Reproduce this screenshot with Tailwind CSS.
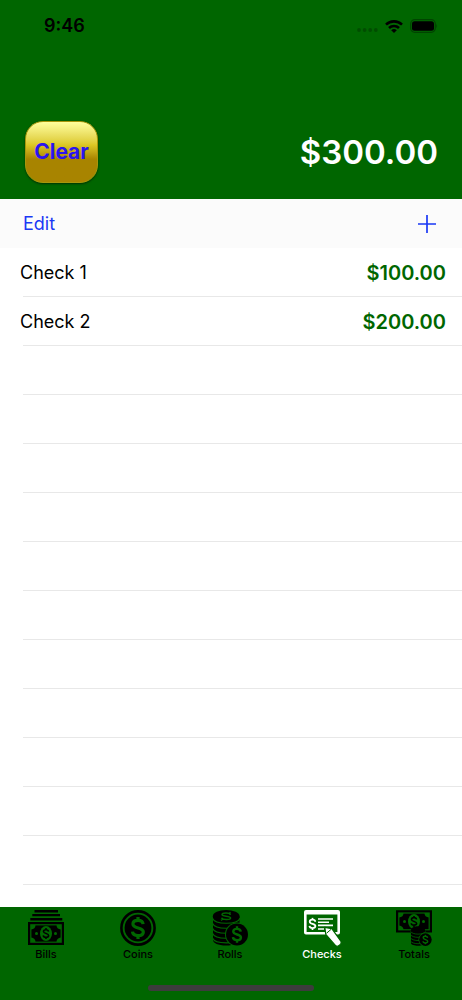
<!DOCTYPE html>
<html lang="en">
<head>
    <meta charset="UTF-8">
    <meta name="viewport" content="width=device-width, initial-scale=1.0">
    <title>Checks</title>
    <script src="https://cdn.jsdelivr.net/npm/@tailwindcss/browser@4"></script>
</head>
<body class="flex min-h-screen flex-col bg-white font-['Inter','Liberation_Sans',sans-serif] text-black">

    <!-- Shared dollar sign for the icons -->
    <svg class="hidden">
        <symbol id="dollar" viewBox="-7 -10 14 20">
            <path d="M4.4 -3.4C4.2 -5.4 2.6 -6.6 0 -6.6C-2.6 -6.6 -4.4 -5.5 -4.4 -3.5C-4.4 0.8 4.6 -0.8 4.6 3.4C4.6 5.5 2.6 6.6 0 6.6C-2.8 6.6 -4.6 5.5 -4.8 3.2M0 -9.6V-6M0 9.6V6" fill="none" stroke="currentColor" stroke-width="2.8"/>
        </symbol>
    </svg>

    <header class="bg-[#006600]">
        <div class="flex items-center justify-between pt-3 pr-6 pl-11">
            <span class="text-lg font-semibold">9:46</span>
            <div class="flex items-center gap-[7px]">
                <svg class="mt-2 h-1 w-[21px]" viewBox="0 0 21 4" fill="#004d00">
                    <circle cx="2" cy="2" r="1.9"/><circle cx="7.6" cy="2" r="1.9"/><circle cx="13.2" cy="2" r="1.9"/><circle cx="18.8" cy="2" r="1.9"/>
                </svg>
                <svg class="h-[13px] w-[18px]" viewBox="0 0 18 13" fill="none" stroke="black" stroke-width="2.6">
                    <path d="M1 4.6A11.5 11.5 0 0 1 17 4.6"/>
                    <path d="M4 8A7.2 7.2 0 0 1 14 8"/>
                    <path d="M9 13L6.2 10.3A4 4 0 0 1 11.8 10.3Z" fill="black" stroke="none"/>
                </svg>
                <svg class="h-[14px] w-[28px]" viewBox="0 0 28 14">
                    <rect x="0.7" y="0.7" width="24.6" height="12.6" rx="4" fill="none" stroke="#004400" stroke-width="1.2"/>
                    <rect x="2" y="2.2" width="22" height="9.6" rx="2.5"/>
                    <path d="M26.4 4.8Q28 7 26.4 9.2Z" fill="#004000"/>
                </svg>
            </div>
        </div>
        <div class="flex items-center justify-between px-6 pt-[81px] pb-4">
            <button class="ml-px h-[62px] w-[73px] rounded-[18px] border border-[#a8960c] bg-linear-to-b from-[#ffff9c] via-[#dcc824] via-38% to-[#a88400] to-62% text-[21px] font-bold text-[#2a14f0] shadow-[0_1px_2px_#003300]">Clear</button>
            <span class="text-[33px] leading-10 font-semibold text-white">$300.00</span>
        </div>
    </header>

    <div class="flex h-[49px] items-center justify-between bg-[#fbfbfb] pr-[26px] pl-[23px] text-[#1a38f5]">
        <button class="text-lg">Edit</button>
        <button aria-label="Add check">
            <svg class="size-[18px]" viewBox="0 0 18 18" stroke="currentColor" stroke-width="1.7"><path d="M9 0V18M0 9H18"/></svg>
        </button>
    </div>

    <main class="flex-1">
        <ul>
            <li>
                <div class="flex h-12 items-center justify-between pt-0.5 pr-4 pl-5">
                    <span class="text-lg">Check 1</span>
                    <span class="text-xl font-semibold text-[#006600]">$100.00</span>
                </div>
                <div class="ml-[23px] h-px bg-[#e8e8e8]"></div>
            </li>
            <li>
                <div class="flex h-12 items-center justify-between pt-0.5 pr-4 pl-5">
                    <span class="text-lg">Check 2</span>
                    <span class="text-xl font-semibold text-[#006600]">$200.00</span>
                </div>
                <div class="ml-[23px] h-px bg-[#e8e8e8]"></div>
            </li>
        </ul>
        <!-- Empty rows -->
        <div class="ml-[23px]">
            <div class="h-[49px] border-b border-[#e8e8e8]"></div>
            <div class="h-[49px] border-b border-[#e8e8e8]"></div>
            <div class="h-[49px] border-b border-[#e8e8e8]"></div>
            <div class="h-[49px] border-b border-[#e8e8e8]"></div>
            <div class="h-[49px] border-b border-[#e8e8e8]"></div>
            <div class="h-[49px] border-b border-[#e8e8e8]"></div>
            <div class="h-[49px] border-b border-[#e8e8e8]"></div>
            <div class="h-[49px] border-b border-[#e8e8e8]"></div>
            <div class="h-[49px] border-b border-[#e8e8e8]"></div>
            <div class="h-[49px] border-b border-[#e8e8e8]"></div>
            <div class="h-[49px] border-b border-[#e8e8e8]"></div>
        </div>
    </main>

    <footer class="bg-[#006600] pt-[3px] pb-[9px]">
        <nav class="mr-0.5 grid grid-cols-5 text-[11px] leading-4 font-medium">
            <a href="#bills" class="flex flex-col items-center">
                <svg class="size-9" viewBox="0 0 36 36">
                    <path d="M6.5 0H30V2.5H6.5ZM4.3 4H32V6.3H4.3ZM2.3 8H34.3V10.4H2.3Z"/>
                    <path d="M0 12H36V35H0Z"/>
                    <rect x="2.8" y="14.8" width="30.4" height="17.4" fill="none" stroke="#006600" stroke-width="1.2"/>
                    <path d="M3 15H7.5Q7.5 19 3 19.5ZM33 15H28.5Q28.5 19 33 19.5ZM3 32H7.5Q7.5 28 3 27.5ZM33 32H28.5Q28.5 28 33 27.5Z" fill="#006600"/>
                    <g fill="#006600"><ellipse cx="18" cy="23.5" rx="6" ry="7.6"/><circle cx="8.5" cy="23.5" r="1.5"/><circle cx="27.5" cy="23.5" r="1.5"/></g>
                    <use href="#dollar" x="14" y="17.5" width="8" height="12"/>
                </svg>
                Bills
            </a>
            <a href="#coins" class="flex flex-col items-center">
                <svg class="size-9" viewBox="0 0 36 36">
                    <circle cx="18" cy="18" r="16.6" fill="none" stroke="black" stroke-width="2.6"/>
                    <circle cx="18" cy="18" r="13.4"/>
                    <use href="#dollar" x="9" y="6.5" width="18" height="23" class="text-[#006600]"/>
                </svg>
                Coins
            </a>
            <a href="#rolls" class="flex flex-col items-center">
                <svg class="size-9" viewBox="0 0 36 36">
                    <path d="M1 6.5H27.5V30C27.5 33 22 35.5 14 35.5S1 33 1 30Z"/>
                    <ellipse cx="14.2" cy="6.4" rx="13.4" ry="6.4"/>
                    <g fill="none" stroke="#006600" stroke-width="1.1">
                        <path d="M0.5 8.2C3 15 25.5 15 28 8.2"/>
                        <path d="M0.5 13.2C3 20 25.5 20 28 13.2"/>
                        <path d="M0.5 18.2C3 25 25.5 25 28 18.2"/>
                        <path d="M0.5 23.2C3 30 25.5 30 28 23.2"/>
                        <path d="M0.5 28C3 34.5 25.5 34.5 28 28"/>
                        <path d="M18.4 4.8C18 2.6 10.4 2.2 10 4.6C9.8 6.6 18.6 5.8 18.6 8C18.4 10.2 10.4 10 9.6 7.8M18.6 2.4L16.8 3.6M10.8 9L9 10.4" stroke-width="1.5"/>
                    </g>
                    <circle cx="25" cy="24.5" r="12" fill="#006600"/>
                    <circle cx="25" cy="24.5" r="11"/>
                    <use href="#dollar" x="18" y="16" width="14" height="17" class="text-[#006600]"/>
                </svg>
                Rolls
            </a>
            <a href="#checks" aria-current="page" class="flex flex-col items-center text-white">
                <svg class="size-9 overflow-visible" viewBox="0 0 36 36">
                    <path d="M2 0H34Q36 0 36 2V22.5Q36 24.5 34 24.5H2Q0 24.5 0 22.5V2Q0 0 2 0ZM2.6 4.5V21.9H33.4V4.5Z" fill="white" fill-rule="evenodd"/>
                    <use href="#dollar" x="4" y="7.6" width="9" height="12.6"/>
                    <path d="M14 9H29M14 12.2H25M14 15.4H29M14 19H20" stroke="white" stroke-width="1.6"/>
                    <path d="M20.8 17.4L27.8 18.6L37 31.4Q37.8 33.2 35.8 35Q33.6 37 31.8 35.8L21.8 24.4Z" fill="white" stroke="#006600" stroke-width="1.2"/>
                    <path d="M22.6 23.2L27 19.4" stroke="#006600" stroke-width="1"/>
                </svg>
                Checks
            </a>
            <a href="#totals" class="flex flex-col items-center">
                <svg class="size-9" viewBox="0 0 36 36">
                    <path d="M0 0.3H36V22.5H0Z"/>
                    <rect x="2.8" y="3" width="30.4" height="16.8" fill="none" stroke="#006600" stroke-width="1.2"/>
                    <path d="M3 3H7.5Q7.5 7 3 7.5ZM33 3H28.5Q28.5 7 33 7.5ZM3 20H7.5Q7.5 16 3 15.5Z" fill="#006600"/>
                    <g fill="#006600"><ellipse cx="18" cy="11.4" rx="6" ry="7.4"/><circle cx="8.5" cy="11.4" r="1.5"/><circle cx="27.5" cy="11.4" r="1.5"/></g>
                    <use href="#dollar" x="14" y="5.4" width="8" height="12"/>
                    <path d="M15 20C15 15 29 15 29 20V33C29 36.6 15 36.6 15 33Z"/>
                    <path d="M14.5 21.5C17 25 27 25 29.5 21.5M14.5 24.7C17 28.2 27 28.2 29.5 24.7M14.5 27.9C17 31.4 27 31.4 29.5 27.9M14.5 31.1C17 34.6 27 34.6 29.5 31.1" fill="none" stroke="#006600" stroke-width="0.8"/>
                    <circle cx="29.4" cy="29.6" r="7" fill="#006600"/>
                    <circle cx="29.4" cy="29.6" r="6.3"/>
                    <use href="#dollar" x="25.4" y="24.6" width="8" height="10" class="text-[#006600]"/>
                </svg>
                Totals
            </a>
        </nav>
        <div class="mx-auto mt-[23px] h-1.5 w-[166px] rounded-full bg-[#3c3c3c]"></div>
    </footer>

</body>
</html>
